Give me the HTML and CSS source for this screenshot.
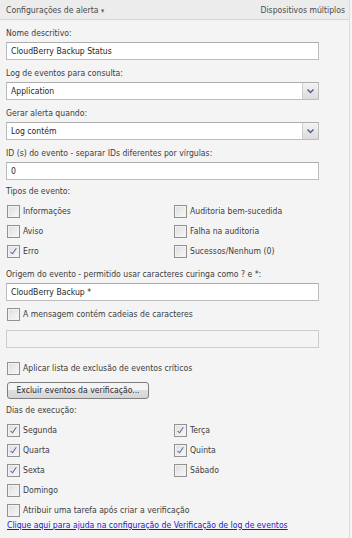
FILE: index.html
```html
<!DOCTYPE html>
<html lang="pt-BR">
<head>
    <meta charset="UTF-8">
    <title>Configurações de alerta</title>
    <link rel="stylesheet" href="styles.css">
</head>
<body>
    <div class="panel">
        <div class="topbar">
            <span class="menu">Configurações de alerta <span class="caret">&#9662;</span></span>
            <span class="multi">Dispositivos múltiplos</span>
        </div>
        <div class="form">
            <div class="lbl first">Nome descritivo:</div>
            <div class="txt">CloudBerry Backup Status</div>

            <div class="lbl">Log de eventos para consulta:</div>
            <div class="txt sel">Application<span class="arrow"><svg width="9" height="6" viewBox="0 0 9 6"><path d="M1.5 1.5 L4.5 4.5 L7.5 1.5" fill="none" stroke="#4d6185" stroke-width="1.5"/></svg></span></div>

            <div class="lbl">Gerar alerta quando:</div>
            <div class="txt sel">Log contém<span class="arrow"><svg width="9" height="6" viewBox="0 0 9 6"><path d="M1.5 1.5 L4.5 4.5 L7.5 1.5" fill="none" stroke="#4d6185" stroke-width="1.5"/></svg></span></div>

            <div class="lbl">ID (s) do evento - separar IDs diferentes por vírgulas:</div>
            <div class="txt">0</div>

            <div class="lbl tight">Tipos de evento:</div>
            <div class="checks">
                <div class="row"><span class="cb"></span>Informações</div>
                <div class="row"><span class="cb"></span>Auditoria bem-sucedida</div>
                <div class="row"><span class="cb"></span>Aviso</div>
                <div class="row"><span class="cb"></span>Falha na auditoria</div>
                <div class="row"><span class="cb on"></span>Erro</div>
                <div class="row"><span class="cb"></span>Sucessos/Nenhum (0)</div>
            </div>

            <div class="lbl">Origem do evento - permitido usar caracteres curinga como ? e *:</div>
            <div class="txt">CloudBerry Backup *</div>

            <div class="row single"><span class="cb"></span>A mensagem contém cadeias de caracteres</div>
            <div class="txt off"></div>

            <div class="row single wide"><span class="cb"></span>Aplicar lista de exclusão de eventos críticos</div>
            <div class="btn">Excluir eventos da verificação...</div>

            <div class="lbl tight">Dias de execução:</div>
            <div class="checks">
                <div class="row"><span class="cb on"></span>Segunda</div>
                <div class="row"><span class="cb on"></span>Terça</div>
                <div class="row"><span class="cb on"></span>Quarta</div>
                <div class="row"><span class="cb on"></span>Quinta</div>
                <div class="row"><span class="cb on"></span>Sexta</div>
                <div class="row"><span class="cb"></span>Sábado</div>
                <div class="row"><span class="cb"></span>Domingo</div>
            </div>

            <div class="row single last"><span class="cb"></span>Atribuir uma tarefa após criar a verificação</div>
            <a class="help" href="#">Clique aqui para ajuda na configuração de Verificação de log de eventos</a>
        </div>
    </div>
</body>
</html>
```

FILE: styles.css
```css
body {
    margin: 0;
    background-color: #f4f4f4;
    font-family: 'DejaVu Sans Condensed', 'Liberation Sans', sans-serif;
    font-size: 8.6px;
    color: #3c3c3c;
    overflow: hidden;
}
.panel {
    width: 349px;
    height: 538px;
    border-right: 1px solid #dddddd;
}
.topbar {
    height: 19px;
    background-color: #ececec;
    border-bottom: 1px solid #d6d6d6;
    display: flex;
    justify-content: space-between;
    align-items: center;
    padding: 0 4px 0 6px;
    color: #4a4a4a;
}
.caret {
    font-size: 7px;
    color: #666666;
}
.form {
    padding-left: 6px;
}
.lbl {
    line-height: 13px;
    margin-top: 7px;
}
.lbl.tight {
    margin-top: 5px;
}
.txt {
    box-sizing: border-box;
    width: 313px;
    height: 18px;
    margin-top: 2px;
    padding: 0 4px;
    line-height: 16px;
    background-color: #ffffff;
    border: 1px solid #bdbdbd;
    border-top-color: #adadad;
    color: #262626;
    position: relative;
}
.txt.off {
    background-color: #f4f4f4;
    border-color: #cdcdcd;
    margin-top: 6px;
}
.arrow {
    position: absolute;
    top: 0;
    right: 0;
    width: 15px;
    height: 16px;
    background: linear-gradient(#f4f4f4, #dcdcdc);
    border-left: 1px solid #cfcfcf;
    display: flex;
    align-items: center;
    justify-content: center;
}
.checks {
    display: grid;
    grid-template-columns: 167px 1fr;
    margin-top: 3px;
}
.row {
    height: 20px;
    display: flex;
    align-items: center;
}
.row.single {
    margin-top: 3px;
}
.row.wide {
    margin-top: 10px;
}
.row.last {
    margin-top: 0;
}
.cb {
    box-sizing: border-box;
    width: 13px;
    height: 13px;
    margin: 0 3px 0 1px;
    border: 1px solid #929292;
    background: linear-gradient(135deg, #dedede, #f8f8f8);
    box-shadow: inset 0 0 0 1px #f2f2f2;
    position: relative;
}
.cb.on::after {
    content: '';
    position: absolute;
    left: 4px;
    top: 1px;
    width: 2px;
    height: 6px;
    border-right: 1.5px solid #52689a;
    border-bottom: 1.5px solid #52689a;
    transform: rotate(35deg);
}
.btn {
    box-sizing: border-box;
    width: 142px;
    height: 17px;
    margin: 4px 0 0 1px;
    border: 1px solid #7e7e7e;
    border-radius: 3px;
    background: linear-gradient(#f4f4f4 45%, #dedede 50%, #d5d5d5);
    text-align: center;
    line-height: 15px;
    color: #2a2a2a;
}
.help {
    display: block;
    margin-left: 1px;
    margin-top: -1px;
    line-height: 12px;
    color: #1a1ad0;
    text-decoration: underline;
}
```
